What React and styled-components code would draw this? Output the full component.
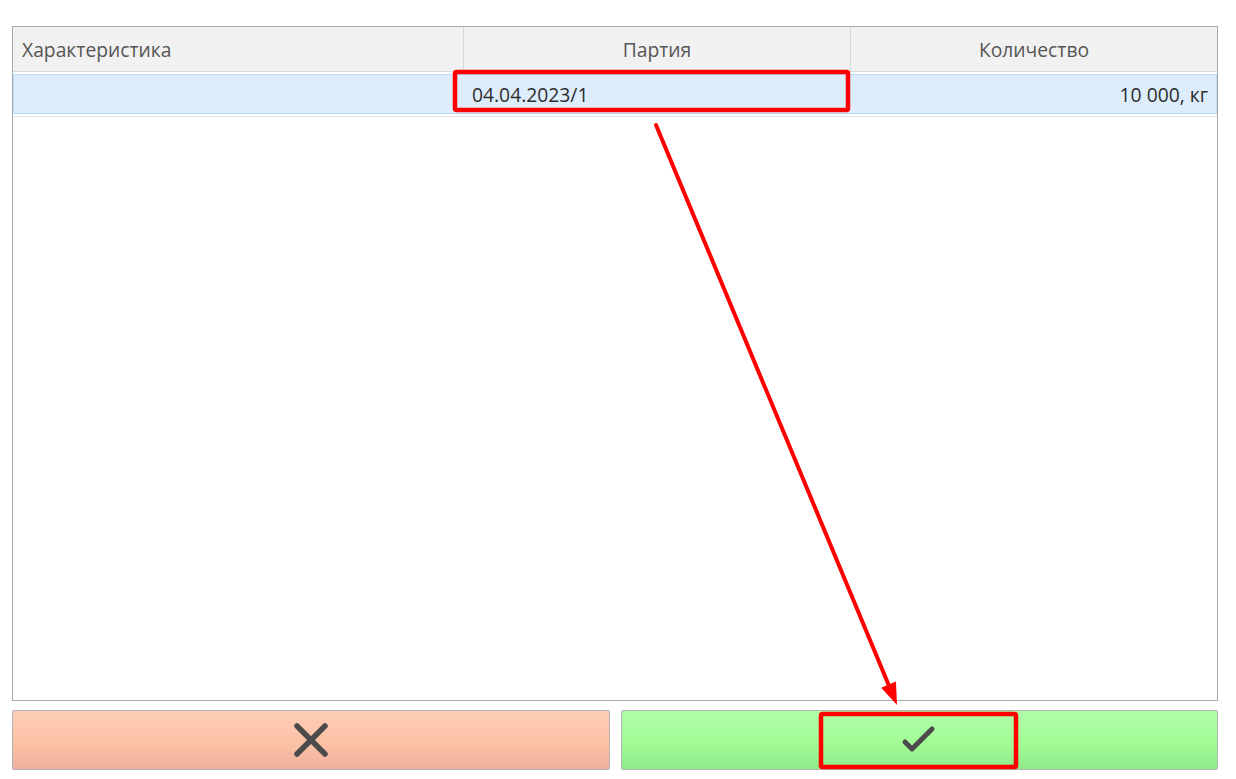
import React from 'react'
import styled, { createGlobalStyle } from 'styled-components'

const GlobalStyle = createGlobalStyle`
  html, body {
    margin: 0;
    padding: 0;
    background: #fff;
  }
  body {
    font-family: 'Open Sans', 'Noto Sans', sans-serif;
  }
`

const Page = styled.div`
  position: relative;
  width: 1236px;
  height: 779px;
  box-sizing: border-box;
  padding: 26px 18px 0 12px;
  display: flex;
  flex-direction: column;
  gap: 9px;
`

const Table = styled.div`
  height: 675px;
  box-sizing: border-box;
  border: 1px solid #a9a9a9;
  display: flex;
  flex-direction: column;
`

const Row = styled.div`
  display: grid;
  grid-template-columns: 450px 387px 1fr;
`

const HeaderRow = styled(Row)`
  height: 44px;
  background: #f1f1f1;
  border-bottom: 1px solid #dcdcdc;
`

const HeadCell = styled.div`
  display: flex;
  align-items: center;
  justify-content: ${p => (p.align === 'left' ? 'flex-start' : 'center')};
  padding: 0 9px;
  font-size: 19.3px;
  color: #565656;
  border-left: ${p => (p.first ? 'none' : '1px solid #d6d6d6')};
`

const DataRow = styled(Row)`
  margin-top: 2px;
  height: 40px;
  box-sizing: border-box;
  background: #ddedfb;
  border: 1px solid #b7dbf8;
`

const BelowRow = styled.div`
  margin-top: 2px;
  border-top: 1px solid #e4e4e4;
`

const Cell = styled.div`
  display: flex;
  align-items: center;
  justify-content: ${p => (p.align === 'right' ? 'flex-end' : 'flex-start')};
  padding: 0 8px;
  font-size: 19.3px;
  color: #2e2e2e;
`

const Buttons = styled.div`
  display: grid;
  grid-template-columns: 1fr 1fr;
  gap: 11px;
`

const Button = styled.button`
  height: 60px;
  border: 1px solid #b3b3b3;
  border-radius: 2px;
  display: flex;
  align-items: center;
  justify-content: center;
  padding: 0;
  cursor: pointer;
  background: ${p =>
    p.kind === 'ok'
      ? 'linear-gradient(to bottom, #afffa9 0%, #a2fb96 55%, #8fea88 100%)'
      : 'linear-gradient(to bottom, #fdcdb6 0%, #fdc1a6 55%, #eeb09c 100%)'};
`

const Overlay = styled.svg`
  position: absolute;
  left: 0;
  top: 0;
  pointer-events: none;
`

const CrossIcon = () => (
  <svg width="34" height="34" viewBox="0 0 34 34">
    <path d="M3 3 L31 31 M31 3 L3 31" stroke="#4b4b4b" strokeWidth="5.5" strokeLinecap="round" fill="none" />
  </svg>
)

const CheckIcon = () => (
  <svg width="36" height="30" viewBox="0 0 36 30">
    <path d="M4 17 L11 24 L31 4" stroke="#4b4b4b" strokeWidth="5" strokeLinecap="round" strokeLinejoin="round" fill="none" />
  </svg>
)

export default function App () {
  // arrow from the batch cell to the confirm button
  const x1 = 656, y1 = 125, x2 = 897, y2 = 705
  const len = Math.hypot(x2 - x1, y2 - y1)
  const ux = (x2 - x1) / len, uy = (y2 - y1) / len
  const headLen = 22, headW = 8
  const bx = x2 - ux * headLen, by = y2 - uy * headLen
  const head = `${x2},${y2} ${bx - uy * headW},${by + ux * headW} ${bx + uy * headW},${by - ux * headW}`

  return (
    <Page>
      <GlobalStyle />
      <Table>
        <HeaderRow>
          <HeadCell first align="left">Характеристика</HeadCell>
          <HeadCell>Партия</HeadCell>
          <HeadCell>Количество</HeadCell>
        </HeaderRow>
        <DataRow>
          <Cell />
          <Cell>04.04.2023/1</Cell>
          <Cell align="right">10 000, кг</Cell>
        </DataRow>
        <BelowRow />
      </Table>
      <Buttons>
        <Button kind="cancel"><CrossIcon /></Button>
        <Button kind="ok"><CheckIcon /></Button>
      </Buttons>

      <Overlay width="1236" height="779">
        <rect x="455" y="72" width="393" height="38" rx="1.5" fill="none" stroke="#ff0000" strokeWidth="4.5" />
        <rect x="821" y="714" width="195" height="53" rx="1.5" fill="none" stroke="#ff0000" strokeWidth="4.5" />
        <line x1={x1} y1={y1} x2={bx} y2={by} stroke="#ff0000" strokeWidth="4" strokeLinecap="round" />
        <polygon points={head} fill="#ff0000" />
      </Overlay>
    </Page>
  )
}
